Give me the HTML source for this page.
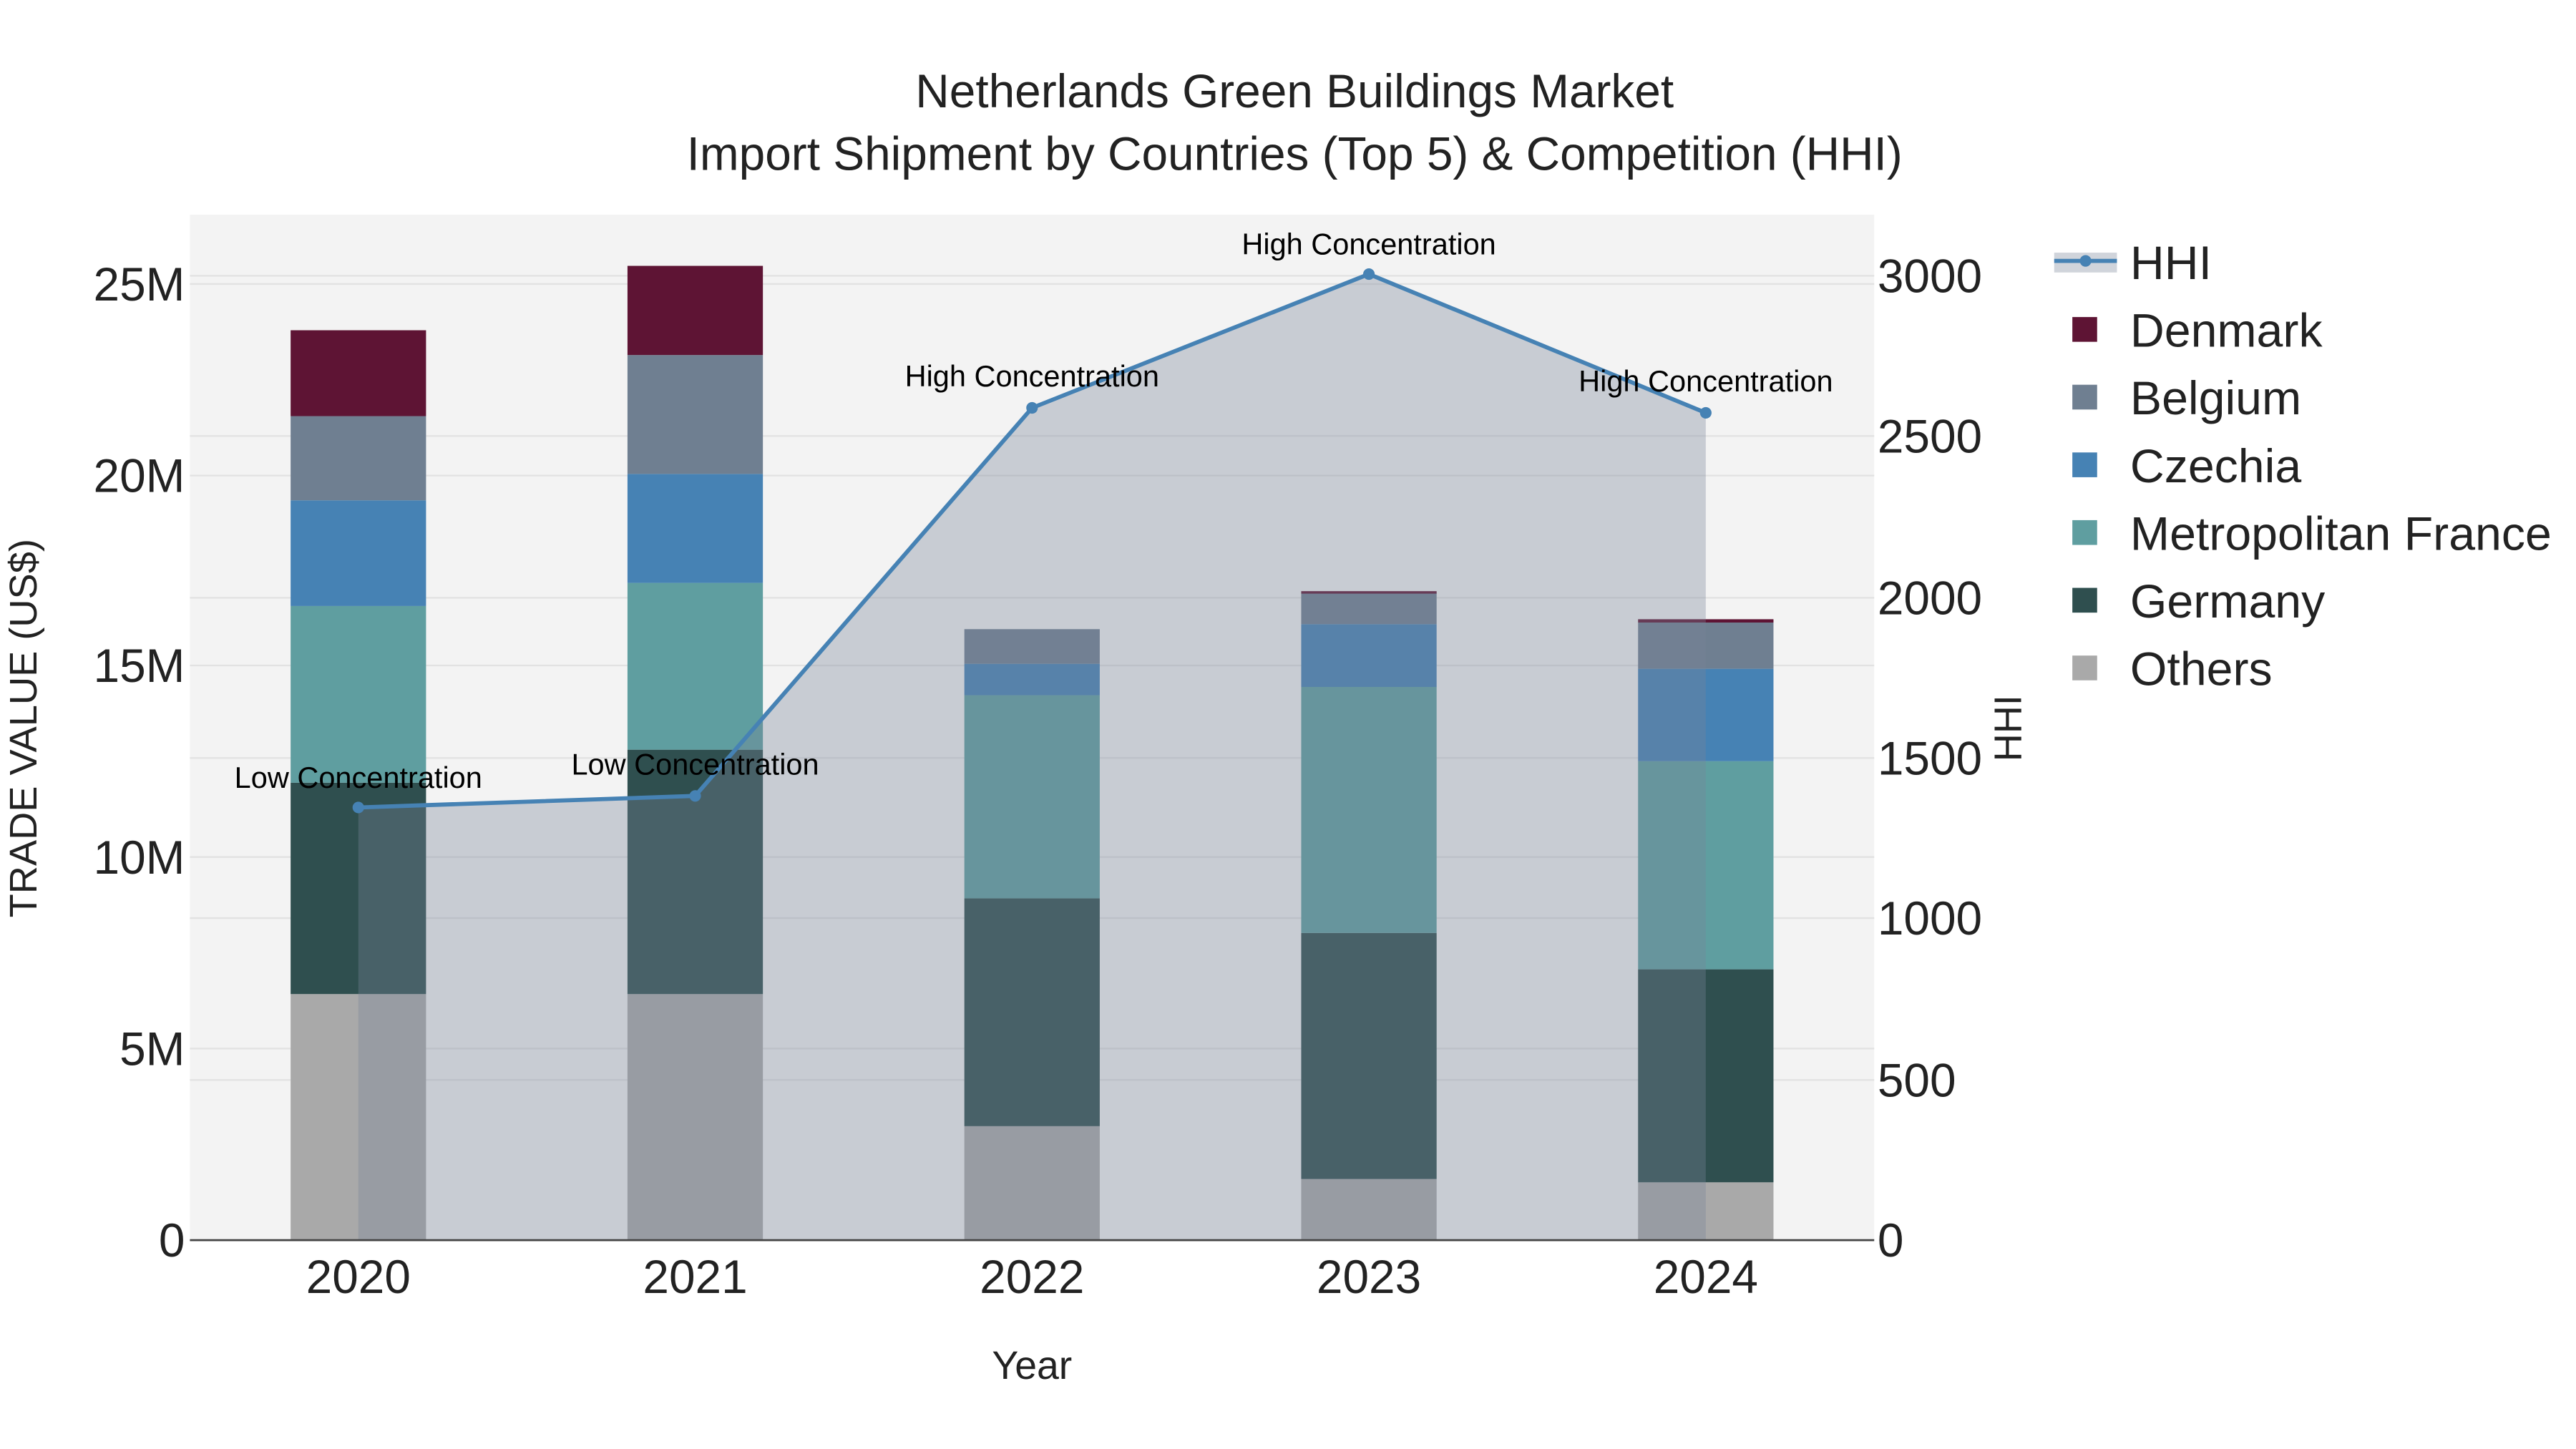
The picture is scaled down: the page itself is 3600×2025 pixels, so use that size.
<!DOCTYPE html>
<html><head><meta charset="utf-8"><style>
html,body{margin:0;padding:0;background:#fff;}
svg{display:block;}
text{font-family:"Liberation Sans",sans-serif;}
</style></head><body>
<svg width="3600" height="2025" viewBox="0 0 1560 877.5" xmlns="http://www.w3.org/2000/svg">
<rect x="0" y="0" width="1560" height="877.5" fill="#fff"/>
<rect x="115" y="130" width="1020" height="621" fill="#f3f3f3"/>
<g stroke="#e2e2e2" stroke-width="1">
<line x1="115" x2="1135" y1="635" y2="635"/>
<line x1="115" x2="1135" y1="519" y2="519"/>
<line x1="115" x2="1135" y1="403" y2="403"/>
<line x1="115" x2="1135" y1="288" y2="288"/>
<line x1="115" x2="1135" y1="172" y2="172"/>
<line x1="115" x2="1135" y1="654" y2="654"/>
<line x1="115" x2="1135" y1="556" y2="556"/>
<line x1="115" x2="1135" y1="459" y2="459"/>
<line x1="115" x2="1135" y1="362" y2="362"/>
<line x1="115" x2="1135" y1="264" y2="264"/>
<line x1="115" x2="1135" y1="167" y2="167"/>
</g>
<g>
<rect x="176" y="602" width="82" height="149" fill="#a9a9a9"/>
<rect x="176" y="474" width="82" height="128" fill="#2f4f4f"/>
<rect x="176" y="367" width="82" height="107" fill="#5f9ea0"/>
<rect x="176" y="303" width="82" height="64" fill="#4682b4"/>
<rect x="176" y="252" width="82" height="51" fill="#6f7f91"/>
<rect x="176" y="200" width="82" height="52" fill="#5e1434"/>

<rect x="380" y="602" width="82" height="149" fill="#a9a9a9"/>
<rect x="380" y="454" width="82" height="148" fill="#2f4f4f"/>
<rect x="380" y="353" width="82" height="101" fill="#5f9ea0"/>
<rect x="380" y="287" width="82" height="66" fill="#4682b4"/>
<rect x="380" y="215" width="82" height="72" fill="#6f7f91"/>
<rect x="380" y="161" width="82" height="54" fill="#5e1434"/>

<rect x="584" y="682" width="82" height="69" fill="#a9a9a9"/>
<rect x="584" y="544" width="82" height="138" fill="#2f4f4f"/>
<rect x="584" y="421" width="82" height="123" fill="#5f9ea0"/>
<rect x="584" y="402" width="82" height="19" fill="#4682b4"/>
<rect x="584" y="381" width="82" height="21" fill="#6f7f91"/>

<rect x="788" y="714" width="82" height="37" fill="#a9a9a9"/>
<rect x="788" y="565" width="82" height="149" fill="#2f4f4f"/>
<rect x="788" y="416" width="82" height="149" fill="#5f9ea0"/>
<rect x="788" y="378" width="82" height="38" fill="#4682b4"/>
<rect x="788" y="359" width="82" height="19" fill="#6f7f91"/>
<rect x="788" y="358" width="82" height="1.5" fill="#5e1434"/>

<rect x="992" y="716" width="82" height="35" fill="#a9a9a9"/>
<rect x="992" y="587" width="82" height="129" fill="#2f4f4f"/>
<rect x="992" y="461" width="82" height="126" fill="#5f9ea0"/>
<rect x="992" y="405" width="82" height="56" fill="#4682b4"/>
<rect x="992" y="377" width="82" height="28" fill="#6f7f91"/>
<rect x="992" y="375" width="82" height="2" fill="#5e1434"/>
</g>
<polygon points="217,751 217,489 421,482 625,247 829,166 1033,250 1033,751" fill="rgba(120,131,151,0.35)"/>
<polyline points="217,489 421,482 625,247 829,166 1033,250" fill="none" stroke="#4682b4" stroke-width="2.5"/>
<g fill="#4682b4">
<circle cx="217" cy="489" r="3.5"/><circle cx="421" cy="482" r="3.5"/><circle cx="625" cy="247" r="3.5"/><circle cx="829" cy="166" r="3.5"/><circle cx="1033" cy="250" r="3.5"/>
</g>
<g font-size="18" fill="#000" text-anchor="middle">
<text x="217" y="477">Low Concentration</text>
<text x="421" y="469">Low Concentration</text>
<text x="625" y="234">High Concentration</text>
<text x="829" y="154">High Concentration</text>
<text x="1033" y="237">High Concentration</text>
</g>
<line x1="115" x2="1135" y1="751" y2="751" stroke="#444" stroke-width="1.2"/>
<g font-size="28.5" fill="#222" text-anchor="end">
<text x="112" y="761">0</text>
<text x="112" y="645">5M</text>
<text x="112" y="529">10M</text>
<text x="112" y="413">15M</text>
<text x="112" y="298">20M</text>
<text x="112" y="182">25M</text>
</g>
<g font-size="28.5" fill="#222" text-anchor="start">
<text x="1137" y="761">0</text>
<text x="1137" y="664">500</text>
<text x="1137" y="566">1000</text>
<text x="1137" y="469">1500</text>
<text x="1137" y="372">2000</text>
<text x="1137" y="274">2500</text>
<text x="1137" y="177">3000</text>
</g>
<g font-size="28.5" fill="#222" text-anchor="middle">
<text x="217" y="783">2020</text>
<text x="421" y="783">2021</text>
<text x="625" y="783">2022</text>
<text x="829" y="783">2023</text>
<text x="1033" y="783">2024</text>
</g>
<text x="625" y="835" font-size="24" text-anchor="middle" fill="#222">Year</text>
<text transform="translate(22,441) rotate(-90)" font-size="23.5" text-anchor="middle" fill="#222">TRADE VALUE (US$)</text>
<text transform="translate(1224,441) rotate(-90)" font-size="23.5" text-anchor="middle" fill="#222">HHI</text>
<text x="784" y="65" font-size="28.5" text-anchor="middle" fill="#222">Netherlands Green Buildings Market</text>
<text x="784" y="103" font-size="28.5" text-anchor="middle" fill="#222">Import Shipment by Countries (Top 5) &amp; Competition (HHI)</text>
<g>
<rect x="1244" y="153" width="38" height="12" fill="rgba(120,131,151,0.35)"/>
<line x1="1244" x2="1282" y1="158" y2="158" stroke="#4682b4" stroke-width="2.5"/>
<circle cx="1263" cy="158" r="3.5" fill="#4682b4"/>
<rect x="1255" y="192" width="15" height="15" fill="#5e1434"/>
<rect x="1255" y="233" width="15" height="15" fill="#6f7f91"/>
<rect x="1255" y="274" width="15" height="15" fill="#4682b4"/>
<rect x="1255" y="315" width="15" height="15" fill="#5f9ea0"/>
<rect x="1255" y="356" width="15" height="15" fill="#2f4f4f"/>
<rect x="1255" y="397" width="15" height="15" fill="#a9a9a9"/>
</g>
<g font-size="28.7" fill="#222">
<text x="1290" y="169">HHI</text>
<text x="1290" y="210">Denmark</text>
<text x="1290" y="251">Belgium</text>
<text x="1290" y="292">Czechia</text>
<text x="1290" y="333">Metropolitan France</text>
<text x="1290" y="374">Germany</text>
<text x="1290" y="415">Others</text>
</g>
</svg>
</body></html>
